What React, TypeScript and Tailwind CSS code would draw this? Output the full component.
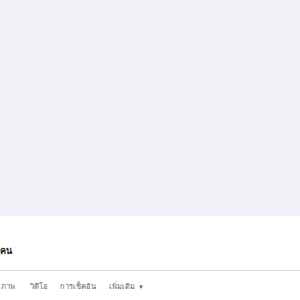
export default function App() {
  return (
    <div className="w-[300px] h-[300px] overflow-hidden bg-white flex flex-col" style={{ fontFamily: '"Liberation Sans", Arial, sans-serif' }}>
      <div className="h-[216px] bg-[#f0f1f6] shrink-0" />
      <div className="h-[55px] flex items-end pb-[14px] border-b border-[#dadde1] shrink-0">
        <span className="text-[9px] font-bold text-[#1c1e21] leading-none">คน</span>
      </div>
      <div className="flex items-center pt-[12px] text-[7.5px] text-[#606770] leading-none">
        <span className="ml-[1px]">ภาพ</span>
        <span className="ml-[15px]">วิดีโอ</span>
        <span className="ml-[12px]">การเช็คอิน</span>
        <span className="ml-[13px] flex items-center gap-[3px]">เพิ่มเติม<span className="text-[6px]">▼</span></span>
      </div>
    </div>
  );
}
